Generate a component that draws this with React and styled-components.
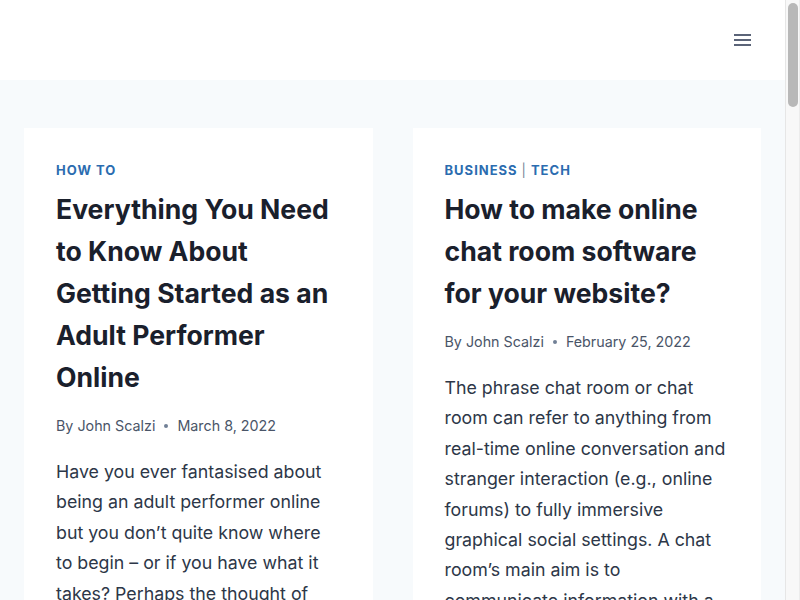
import React from "react";
import styled, { createGlobalStyle } from "styled-components";

const Global = createGlobalStyle`
  html, body { margin: 0; padding: 0; height: 100%; overflow: hidden; }
  body {
    background: #f7fafc;
    font-family: Inter, "Noto Sans", sans-serif;
    color: #2d3748;
    -webkit-font-smoothing: antialiased;
  }
  #root { height: 100%; }
  * { box-sizing: border-box; }
`;

const Frame = styled.div`
  display: flex;
  height: 100vh;
  overflow: hidden;
`;

const Page = styled.div`
  flex: 1;
  min-width: 0;
  background: #f7fafc;
`;

const ScrollRail = styled.div`
  width: 15px;
  flex: none;
  background: #f8f8f8;
  border-left: 1px solid #e6e6e6;
  border-right: 1px solid #ececec;
  padding: 3px 1px 0 2px;
`;

const ScrollThumb = styled.div`
  height: 104px;
  border-radius: 5px;
  background: #b8b8b8;
`;

const Header = styled.header`
  height: 80px;
  background: #ffffff;
  display: flex;
  align-items: center;
  justify-content: flex-end;
  padding: 0 24px;
`;

const MenuButton = styled.button`
  border: 0;
  background: transparent;
  padding: 8px;
  margin-right: 2px;
  display: flex;
  align-items: center;
  cursor: pointer;
`;

const Main = styled.main`
  padding: 48px 24px;
  display: grid;
  grid-template-columns: 1fr 1fr;
  gap: 40px;
  align-items: start;
`;

const Card = styled.article`
  background: #ffffff;
  padding: 32px;
`;

const Cats = styled.div`
  font-size: 13px;
  line-height: 20px;
  font-weight: 700;
  letter-spacing: 1px;
  text-transform: uppercase;
  color: #2b6cb0;
  margin-bottom: 8px;
`;

const Sep = styled.span`
  color: #718096;
  font-weight: 400;
  margin: 0 5px 0 4px;
  letter-spacing: 0;
`;

const Title = styled.h2`
  font-size: 26.6px;
  line-height: 42px;
  font-weight: 700;
  color: #1a202c;
  margin: 0 0 16px;
`;

const Meta = styled.div`
  font-size: 14.3px;
  line-height: 24px;
  color: #4a5568;
  display: flex;
  align-items: center;
  margin-bottom: 19px;
`;

const Dot = styled.span`
  display: inline-block;
  width: 4px;
  height: 4px;
  border-radius: 50%;
  background: #718096;
  margin: 0 9px;
`;

const Excerpt = styled.p`
  font-size: 17.8px;
  line-height: 30.4px;
  margin: 0;
  color: #2d3748;
`;

const posts = [
  {
    cats: ["How To"],
    title: "Everything You Need to Know About Getting Started as an Adult Performer Online",
    date: "March 8, 2022",
    excerpt:
      "Have you ever fantasised about being an adult performer online but you don\u2019t quite know where to begin \u2013 or if you have what it takes? Perhaps the thought of performing in front of a camera excites you, but you are not sure how to get started or where to look for more information.",
  },
  {
    cats: ["Business", "Tech"],
    title: "How to make online chat room software for your website?",
    date: "February 25, 2022",
    excerpt:
      "The phrase chat room or chat room can refer to anything from real-time online conversation and stranger interaction (e.g., online forums) to fully immersive graphical social settings. A chat room\u2019s main aim is to communicate information with a group of people in real time through text.",
  },
];

export default function App() {
  return (
    <Frame>
      <Global />
      <Page>
        <Header>
          <MenuButton aria-label="Menu">
            <svg width="17" height="14" viewBox="0 0 17 14">
              <rect x="0" y="1" width="17" height="2" fill="#5b6478" />
              <rect x="0" y="6" width="17" height="2" fill="#5b6478" />
              <rect x="0" y="11" width="17" height="2" fill="#5b6478" />
            </svg>
          </MenuButton>
        </Header>
        <Main>
          {posts.map((p) => (
            <Card key={p.title}>
              <Cats>
                {p.cats.map((c, i) => (
                  <React.Fragment key={c}>
                    {i > 0 && <Sep>|</Sep>}
                    {c}
                  </React.Fragment>
                ))}
              </Cats>
              <Title>{p.title}</Title>
              <Meta>
                By John Scalzi
                <Dot />
                {p.date}
              </Meta>
              <Excerpt>{p.excerpt}</Excerpt>
            </Card>
          ))}
        </Main>
      </Page>
      <ScrollRail aria-hidden="true">
        <ScrollThumb />
      </ScrollRail>
    </Frame>
  );
}
